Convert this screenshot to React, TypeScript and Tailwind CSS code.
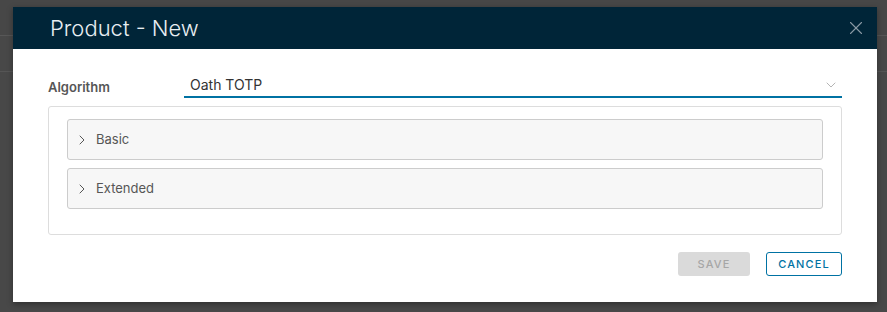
import { ChevronDown, ChevronRight, X } from "lucide-react";

const font = { fontFamily: "Inter, 'Open Sans', sans-serif" };

function Panel({ title }: { title: string }) {
  return (
    <div className="flex h-[41px] items-center gap-[6px] rounded-[3px] border border-[#cccccc] bg-[#f7f7f7] pl-[6px]">
      <ChevronRight size={16} strokeWidth={1.5} className="text-[#565656]" />
      <span className="text-[13px] text-[#565656]">{title}</span>
    </div>
  );
}

export default function App() {
  return (
    <div className="relative h-[312px] w-[887px] overflow-hidden bg-[#484848]" style={font}>
      {/* page behind the overlay */}
      <div className="h-[36px] border-b border-[#575757] bg-[#474747]" />
      <div className="h-[36px] border-b border-[#555555]" />

      <div className="absolute left-[13px] top-[7px] flex h-[295px] w-[864px] flex-col bg-white shadow-[0_2px_6px_rgba(0,0,0,0.35)]">
        <div className="flex h-[42px] items-center justify-between bg-[#002538] pl-[37px] pr-[10px]">
          <h1 className="text-[22px] font-light leading-none text-[#e8eef2]">Product - New</h1>
          <X size={22} strokeWidth={1.2} className="text-[#8a9aa5]" />
        </div>

        <div className="flex flex-1 flex-col px-[35px] pt-[27px]">
          <div className="flex items-end">
            <label className="w-[136px] pb-[1px] text-[13px] font-semibold text-[#565656]">Algorithm</label>
            <div className="flex h-[22px] flex-1 items-end justify-between border-b-2 border-[#0072a3] pb-[2px] pl-[6px] pr-[3px]">
              <span className="text-[14px] leading-[18px] text-[#333333]">Oath TOTP</span>
              <ChevronDown size={16} strokeWidth={1.3} className="mb-[1px] text-[#a8a8a8]" />
            </div>
          </div>

          <div className="mt-[8px] flex h-[129px] flex-col gap-[8px] rounded-[3px] border border-[#dddddd] px-[18px] pt-[12px]">
            <Panel title="Basic" />
            <Panel title="Extended" />
          </div>

          <div className="mt-[17px] flex justify-end gap-[16px]">
            <button className="h-[24px] w-[72px] rounded-[3px] bg-[#dadada] text-[11px] font-medium tracking-[0.1em] text-[#a6a6a6]">
              SAVE
            </button>
            <button className="h-[24px] w-[76px] rounded-[3px] border border-[#0072a3] text-[11px] font-medium tracking-[0.1em] text-[#0072a3]">
              CANCEL
            </button>
          </div>
        </div>
      </div>
    </div>
  );
}
